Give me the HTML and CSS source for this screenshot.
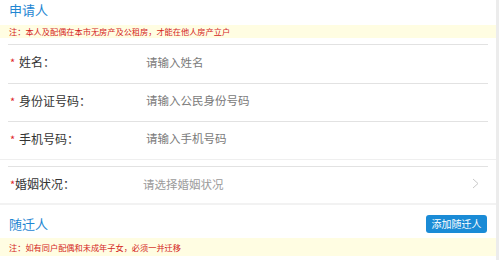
FILE: index.html
```html
<!DOCTYPE html>
<html lang="zh-CN">
<head>
<meta charset="utf-8">
<link rel="stylesheet" href="styles.css">
</head>
<body>
<div class="page">
  <div class="sec-head"><span class="title">申请人</span></div>
  <div class="note">注：本人及配偶在本市无房产及公租房，才能在他人房产立户</div>
  <div class="form">
    <div class="row first"><span class="label"><span class="star">*</span>姓名：</span><span class="ph">请输入姓名</span></div>
    <div class="row"><span class="label"><span class="star">*</span>身份证号码：</span><span class="ph">请输入公民身份号码</span></div>
    <div class="row last"><span class="label"><span class="star">*</span>手机号码：</span><span class="ph">请输入手机号码</span></div>
  </div>
  <div class="form2">
    <div class="row sel"><span class="label tight"><span class="star">*</span>婚姻状况：</span><span class="ph light">请选择婚姻状况</span>
      <svg class="chev" width="7" height="11" viewBox="0 0 7 11"><polyline points="1,1 6,5.5 1,10" fill="none" stroke="#c9c9c9" stroke-width="1"/></svg>
    </div>
  </div>
  <div class="sec-head two"><span class="title">随迁人</span><span class="btn">添加随迁人</span></div>
  <div class="note tall">注：如有同户配偶和未成年子女，必须一并迁移</div>
</div>
<div class="scroll"></div>
</body>
</html>
```
FILE: styles.css
```css
html, body { margin: 0; padding: 0; }
body {
  width: 499px;
  height: 260px;
  overflow: hidden;
  display: flex;
  background: #fff;
  font-family: "Noto Sans CJK SC", "Noto Sans", sans-serif;
  color: #333;
}
.page { width: 496px; display: flex; flex-direction: column; }
.scroll { width: 3px; background: #ececec; }

.sec-head {
  box-sizing: border-box;
  height: 25px;
  padding: 0 9px 5px 9px;
  display: flex;
  align-items: center;
  justify-content: space-between;
}
.sec-head.two { height: 33px; padding: 4px 9px 0 9px; }
.title { font-size: 13px; color: #1f86d2; line-height: 16px; }

.btn {
  font-size: 10px;
  color: #fff;
  background: #1a8bd6;
  border-radius: 3px;
  width: 61px;
  height: 18px;
  line-height: 18px;
  text-align: center;
}

.note {
  background: #fffde2;
  color: #d4241b;
  font-size: 8.2px;
  line-height: 13px;
  height: 13px;
  padding-left: 9px;
}
.note.tall { height: 18px; line-height: 18px; }

.form { margin-top: 6px; border-bottom: 1px solid #efefef; }
.row {
  box-sizing: border-box;
  height: 38px;
  margin: 0 8px;
  padding: 0 0 5px 2px;
  display: flex;
  align-items: center;
  border-top: 1px solid #e2e2e2;
  font-size: 12px;
}
.row.first { height: 39px; }
.label { width: 136px; flex: none; color: #333; }
.star { color: #e0262a; display: inline-block; width: 9px; font-size: 11px; }
.label.tight { width: 133px; }
.label.tight .star { width: 5px; }
.ph { color: #7a7a7a; font-size: 11.5px; flex: 1; }
.ph.light { color: #9a9a9a; }
.chev { margin-right: 9px; }

.form2 { margin-top: 6px; border-bottom: 2px solid #f2f2f2; }
.row.sel { height: 37px; padding-bottom: 3px; }
```
